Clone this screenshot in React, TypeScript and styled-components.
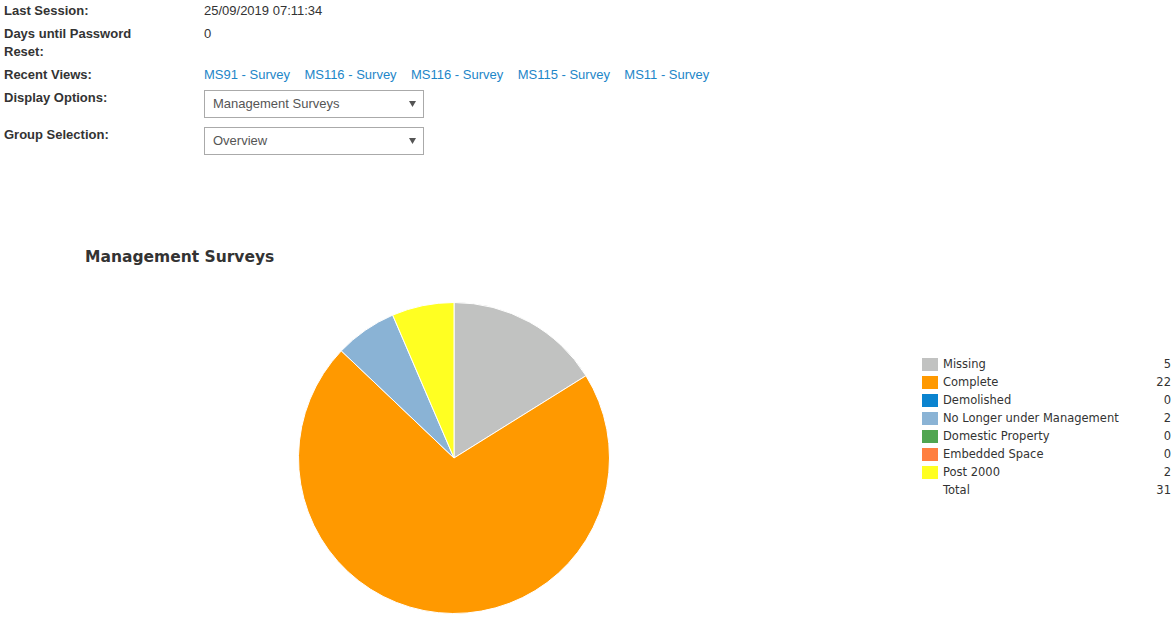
import React from "react";
import styled, { createGlobalStyle } from "styled-components";

const GlobalStyle = createGlobalStyle`
  html, body { margin: 0; padding: 0; background: #fff; }
  body { font-family: "Liberation Sans", Arial, sans-serif; color: #333; }
`;

const Page = styled.div`
  width: 1174px;
  height: 642px;
  overflow: hidden;
  box-sizing: border-box;
  padding: 2px 3px 0 4px;
`;

const InfoGrid = styled.div`
  display: grid;
  grid-template-columns: 200px 1fr;
  row-gap: 5px;
  font-size: 13px;
  line-height: 18px;
`;

const Label = styled.div`
  font-weight: bold;
  color: #333;
  width: 135px;
`;

const Value = styled.div`
  color: #333;
`;

const Links = styled.div`
  display: flex;
  gap: 14.4px;
`;

const Link = styled.a`
  color: #1d86c8;
  text-decoration: none;
`;

const SelectBox = styled.div<{ $mb?: number }>`
  width: 220px;
  height: 28px;
  box-sizing: border-box;
  border: 1px solid #aaa;
  margin-top: 1px;
  margin-bottom: ${(p) => p.$mb ?? 0}px;
  display: flex;
  align-items: center;
  justify-content: space-between;
  padding: 0 7px 0 8px;
  color: #555;
  font-size: 13px;
`;

const Arrow = styled.svg`
  width: 7px;
  height: 6px;
  flex: none;
`;

const ChartSection = styled.section`
  margin-top: 92px;
  padding-left: 81px;
`;

const ChartTitle = styled.h2`
  margin: 0;
  font-family: "DejaVu Sans", Verdana, sans-serif;
  font-weight: bold;
  font-size: 15.5px;
  line-height: 20px;
  color: #333;
`;

const ChartBody = styled.div`
  display: flex;
  align-items: flex-start;
  margin-top: 34px;
`;

const PieWrap = styled.svg`
  margin-left: 212px;
  flex: none;
`;

const Legend = styled.div`
  margin-left: auto;
  margin-top: 54px;
  width: 249px;
  display: grid;
  grid-template-columns: 16px 1fr auto;
  column-gap: 5px;
  font-family: "DejaVu Sans", Verdana, sans-serif;
  font-size: 11.5px;
  line-height: 18px;
  color: #333;
`;

const Swatch = styled.span<{ $c?: string }>`
  width: 16px;
  height: 13px;
  align-self: center;
  background: ${(p) => p.$c ?? "transparent"};
`;

const LegendNum = styled.span`
  text-align: right;
`;

const data = [
  { name: "Missing", value: 5, color: "#c1c2c1" },
  { name: "Complete", value: 22, color: "#ff9900" },
  { name: "Demolished", value: 0, color: "#0a83cf" },
  { name: "No Longer under Management", value: 2, color: "#8ab3d5" },
  { name: "Domestic Property", value: 0, color: "#50a550" },
  { name: "Embedded Space", value: 0, color: "#ff7f40" },
  { name: "Post 2000", value: 2, color: "#ffff22" },
];

const total = data.reduce((s, d) => s + d.value, 0);

function Pie() {
  const cx = 157;
  const cy = 157;
  const r = 155.5;
  let acc = 0;
  const slices = data
    .filter((d) => d.value > 0)
    .map((d) => {
      const a0 = (acc / total) * Math.PI * 2;
      acc += d.value;
      const a1 = (acc / total) * Math.PI * 2;
      const x0 = cx + r * Math.sin(a0);
      const y0 = cy - r * Math.cos(a0);
      const x1 = cx + r * Math.sin(a1);
      const y1 = cy - r * Math.cos(a1);
      const large = a1 - a0 > Math.PI ? 1 : 0;
      const dPath = `M${cx} ${cy} L${x0} ${y0} A${r} ${r} 0 ${large} 1 ${x1} ${y1} Z`;
      return <path key={d.name} d={dPath} fill={d.color} stroke="#fff" strokeWidth={1} strokeLinejoin="round" />;
    });
  return (
    <PieWrap width={314} height={314} viewBox="0 0 314 314">
      {slices}
    </PieWrap>
  );
}

function Select({ text, mb }: { text: string; mb?: number }) {
  return (
    <SelectBox $mb={mb}>
      <span>{text}</span>
      <Arrow viewBox="0 0 7 6">
        <path d="M0 0 L7 0 L3.5 6 Z" fill="#555" />
      </Arrow>
    </SelectBox>
  );
}

export default function App() {
  const recent = ["MS91 - Survey", "MS116 - Survey", "MS116 - Survey", "MS115 - Survey", "MS11 - Survey"];
  return (
    <>
      <GlobalStyle />
      <Page>
        <InfoGrid>
          <Label>Last Session:</Label>
          <Value>25/09/2019 07:11:34</Value>
          <Label>Days until Password Reset:</Label>
          <Value>0</Value>
          <Label>Recent Views:</Label>
          <Links>
            {recent.map((r, i) => (
              <Link key={i} href="#">
                {r}
              </Link>
            ))}
          </Links>
          <Label>Display Options:</Label>
          <Select text="Management Surveys" mb={3} />
          <Label>Group Selection:</Label>
          <Select text="Overview" />
        </InfoGrid>
        <ChartSection>
          <ChartTitle>Management Surveys</ChartTitle>
          <ChartBody>
            <Pie />
            <Legend>
              {data.map((d) => (
                <React.Fragment key={d.name}>
                  <Swatch $c={d.color} />
                  <span>{d.name}</span>
                  <LegendNum>{d.value}</LegendNum>
                </React.Fragment>
              ))}
              <Swatch />
              <span>Total</span>
              <LegendNum>{total}</LegendNum>
            </Legend>
          </ChartBody>
        </ChartSection>
      </Page>
    </>
  );
}
